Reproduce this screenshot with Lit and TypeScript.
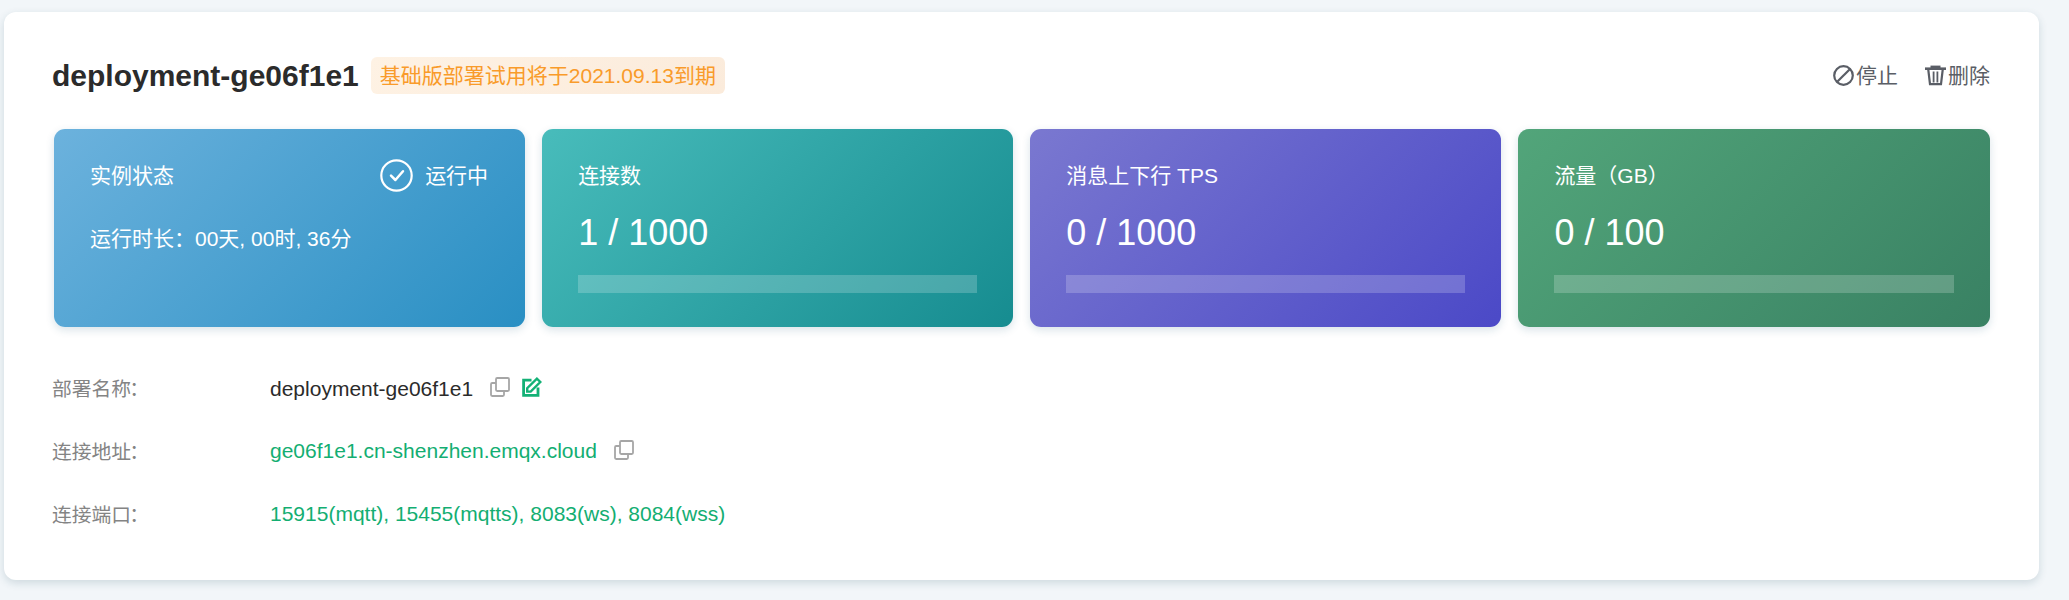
import { LitElement, html, css } from "lit";
import { customElement, property } from "lit/decorators.js";

const copyIcon = html`<svg class="icon copy" viewBox="0 0 20 20" fill="none" stroke="#a6a6a6" stroke-width="1.8">
  <rect x="6" y="1" width="13" height="13" rx="1.2"></rect>
  <path d="M5.9 6H2.2A1.2 1.2 0 0 0 1 7.2v10.6A1.2 1.2 0 0 0 2.2 19h10.6a1.2 1.2 0 0 0 1.2-1.2v-3.7"></path>
</svg>`;

const editIcon = html`<svg class="icon edit" viewBox="0 0 20 20" fill="none" stroke="#13b176">
  <path d="M9.5 3.2H1.6V18.3H16V10.5" stroke-width="2.8"></path>
  <path d="M5.2 14.6V11.2L14.9 1.7L18.3 5L8.7 14.6Z" stroke-width="2.4"></path>
</svg>`;

const stopIcon = html`<svg viewBox="0 0 21 21" fill="none" stroke="currentColor" stroke-width="2.2">
  <circle cx="10.5" cy="10.5" r="9.3"></circle><path d="M4.2 16.8L16.8 4.2"></path>
</svg>`;

const trashIcon = html`<svg viewBox="0 0 21 21" fill="none" stroke="currentColor">
  <path d="M0 3.7H21" stroke-width="2.6"></path>
  <path d="M5.5 1.8H15.5" stroke-width="2.4"></path>
  <path d="M3.2 4L5 19.2H16L17.8 4" stroke-width="2.2"></path>
  <path d="M8.6 6.5V17.5M12.4 6.5V17.5" stroke-width="1.8"></path>
</svg>`;

const checkIcon = html`<svg viewBox="0 0 33 33" fill="none" stroke="#fff">
  <circle cx="16.5" cy="16.5" r="15.2" stroke-width="2.2"></circle>
  <path d="M11 16.6L15.4 21L23 12.3" stroke-width="2.5" stroke-linecap="round" stroke-linejoin="round"></path>
</svg>`;

@customElement("stat-card")
export class StatCard extends LitElement {
  @property() label = "";
  @property() value = "";
  static styles = css`
    :host { display: block; box-sizing: border-box; height: 198px; padding: 30px 36px 0; border-radius: 11px; color: #fff;
      box-shadow: 0 3px 9px rgba(20, 80, 110, .16); }
    .head { display: flex; justify-content: space-between; align-items: center; height: 33px; font-size: 21px; line-height: 33px; }
    .value { font-size: 36px; line-height: 42px; margin-top: 20px; height: 42px; }
    .track { height: 18px; margin-top: 21px; background: rgba(255, 255, 255, .2); }
  `;
  render() {
    return html`<div class="head"><span>${this.label}</span><slot name="state"></slot></div>
      ${this.value
        ? html`<div class="value">${this.value}</div><div class="track"></div>`
        : html`<slot></slot>`}`;
  }
}

@customElement("app-root")
export class AppRoot extends LitElement {
  static styles = css`
    :host { display: block; box-sizing: border-box; height: 600px; padding: 12px 30px 20px 4px; background: #f2f6f9;
      font-family: "Liberation Sans", "Noto Sans CJK SC", sans-serif; color: #2b2b2b; }
    .panel { box-sizing: border-box; height: 568px; background: #fff; border-radius: 12px; padding: 45px 49px 0 48px;
      box-shadow: 0 3px 9px rgba(20, 70, 90, .16); }
    .top { display: flex; align-items: center; height: 37px; }
    h1 { margin: 0; font-size: 30px; line-height: 37px; font-weight: 700; }
    .tag { margin-left: 12px; height: 37px; line-height: 37px; padding: 0 9px; border-radius: 6px; font-size: 21px; color: #f99b2a;
      background: linear-gradient(135deg, #fef2e4, #fbebdb); white-space: nowrap; }
    .actions { margin-left: auto; display: flex; gap: 27px; font-size: 21px; color: #5a5e66; line-height: 37px; }
    .action { display: flex; align-items: center; gap: 2px; }
    .action svg { width: 21px; height: 21px; margin-top: -1px; }
    .cards { display: grid; grid-template-columns: repeat(4, 1fr); gap: 17px; margin: 35px 0.5px 0 2px; }
    .blue { background: linear-gradient(135deg, #6cb2dd, #298fc3); }
    .teal { background: linear-gradient(135deg, #48bcbb, #168c90); }
    .violet { background: linear-gradient(135deg, #7a78d0, #4b49c7); }
    .green { background: linear-gradient(135deg, #52a57a, #398163); }
    .state { display: flex; align-items: center; gap: 12px; margin-right: 1px; }
    .state svg { width: 33px; height: 33px; }
    .uptime { font-size: 21px; line-height: 33px; margin-top: 30px; }
    .info { margin-top: 30.4px; font-size: 21px; }
    .row { display: flex; align-items: center; height: 62.7px; }
    .name { width: 218px; color: #848484; font-size: 19.8px; margin-top: -2px; }
    .colon { margin-left: -2px; }
    .link { color: #13ae72; }
    .icon { width: 20px; height: 20px; margin-top: -3px; }
    .copy { margin-left: 17px; }
    .edit { margin-left: 12px; }
  `;

  private name(text: string) {
    return html`<span class="name">${text}<span class="colon">：</span></span>`;
  }

  render() {
    return html`<div class="panel">
      <div class="top">
        <h1>deployment-ge06f1e1</h1>
        <span class="tag">基础版部署试用将于2021.09.13到期</span>
        <div class="actions">
          <span class="action">${stopIcon}停止</span>
          <span class="action">${trashIcon}删除</span>
        </div>
      </div>
      <div class="cards">
        <stat-card class="blue" label="实例状态">
          <span slot="state" class="state">${checkIcon}运行中</span>
          <div class="uptime">运行时长：00天, 00时, 36分</div>
        </stat-card>
        <stat-card class="teal" label="连接数" value="1 / 1000"></stat-card>
        <stat-card class="violet" label="消息上下行 TPS" value="0 / 1000"></stat-card>
        <stat-card class="green" label="流量（GB）" value="0 / 100"></stat-card>
      </div>
      <div class="info">
        <div class="row">${this.name("部署名称")}<span>deployment-ge06f1e1</span>${copyIcon}${editIcon}</div>
        <div class="row">${this.name("连接地址")}<span class="link">ge06f1e1.cn-shenzhen.emqx.cloud</span>${copyIcon}</div>
        <div class="row">${this.name("连接端口")}<span class="link">15915(mqtt), 15455(mqtts), 8083(ws), 8084(wss)</span></div>
      </div>
    </div>`;
  }
}
